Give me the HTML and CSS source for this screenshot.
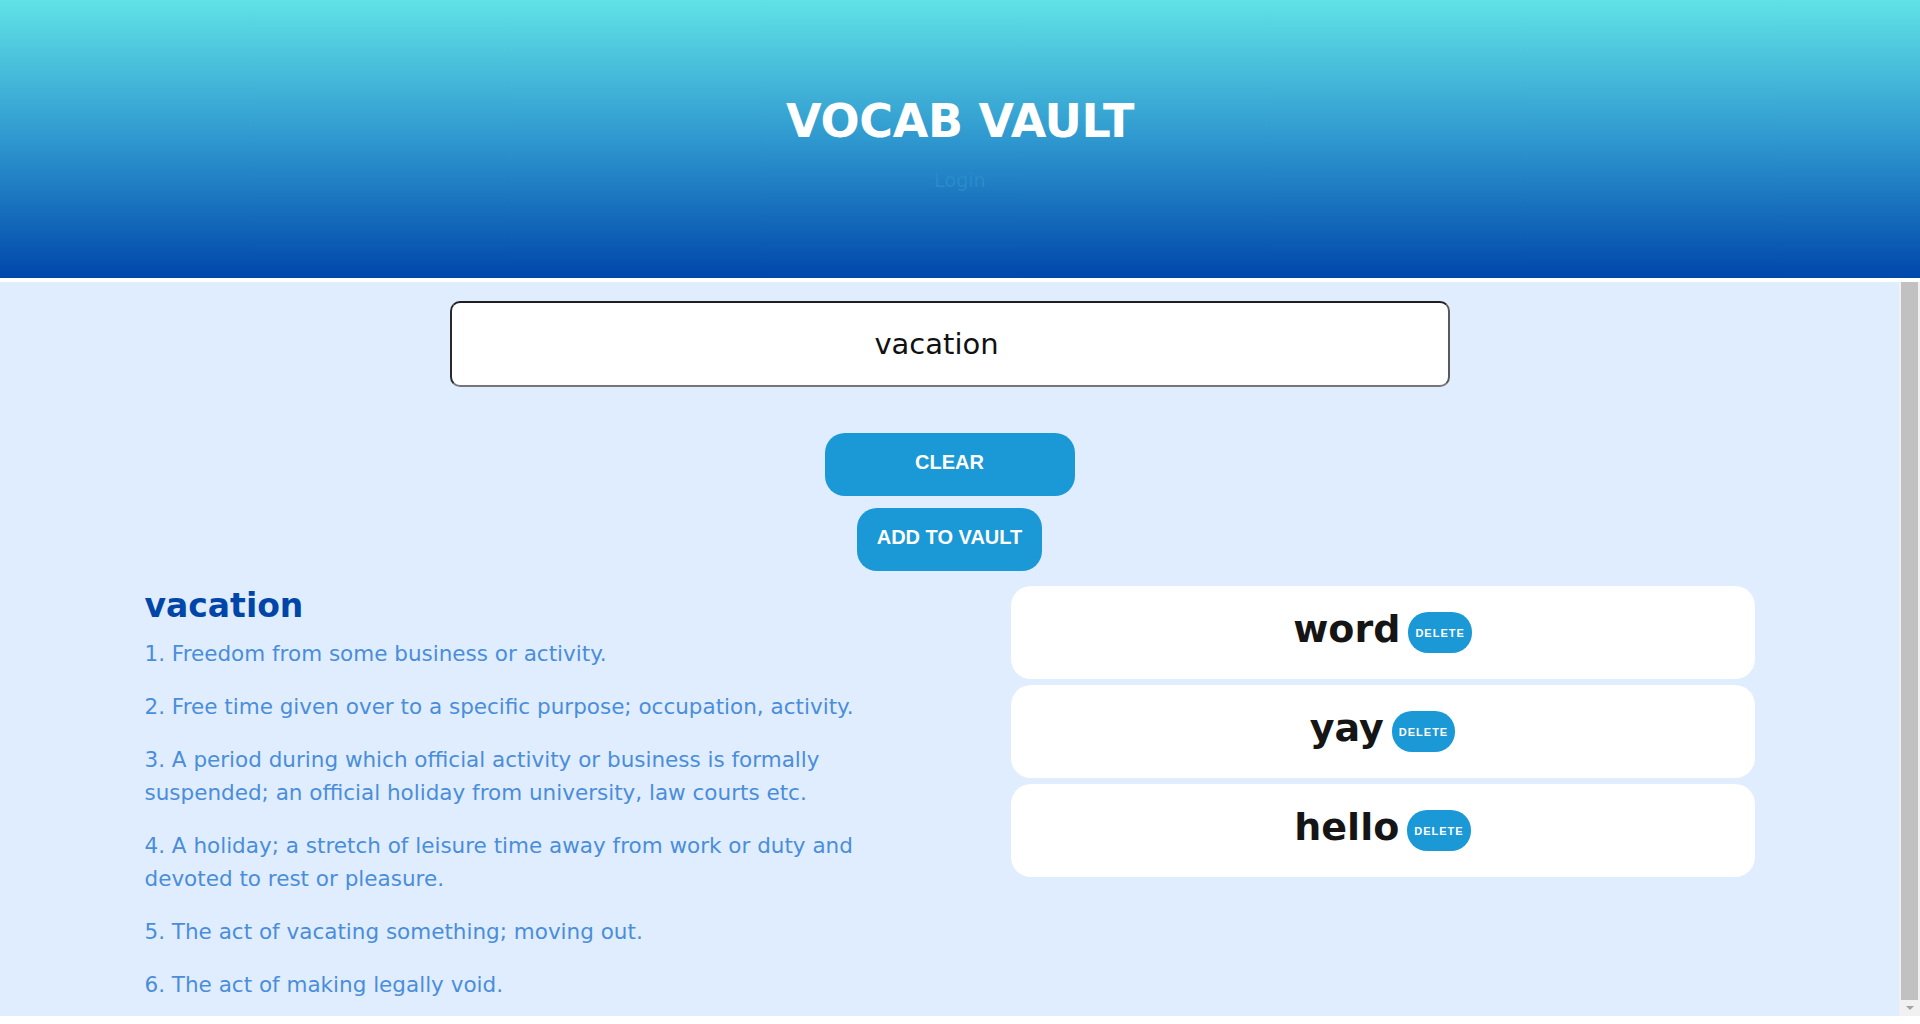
FILE: index.html
```html
<!DOCTYPE html>
<html lang="en">
<head>
<meta charset="utf-8">
<title>Vocab Vault</title>
<link rel="stylesheet" href="styles.css">
</head>
<body>
<header class="hero">
  <h1 class="title">VOCAB VAULT</h1>
  <a class="login">Login</a>
</header>
<main class="main">
  <div class="pane">
    <div class="search">
      <input class="search-input" type="text" value="vacation">
    </div>
    <div class="actions">
      <button class="btn btn-clear">CLEAR</button>
      <button class="btn">ADD TO VAULT</button>
    </div>
    <section class="content">
      <div class="definition">
        <h2 class="def-word">vacation</h2>
        <p class="def">1. Freedom from some business or activity.</p>
        <p class="def">2. Free time given over to a specific purpose; occupation, activity.</p>
        <p class="def">3. A period during which official activity or business is formally suspended; an official holiday from university, law courts etc.</p>
        <p class="def">4. A holiday; a stretch of leisure time away from work or duty and devoted to rest or pleasure.</p>
        <p class="def">5. The act of vacating something; moving out.</p>
        <p class="def">6. The act of making legally void.</p>
      </div>
      <div class="vault">
        <div class="card"><span class="word">word</span><button class="delete">DELETE</button></div>
        <div class="card"><span class="word">yay</span><button class="delete">DELETE</button></div>
        <div class="card"><span class="word">hello</span><button class="delete">DELETE</button></div>
      </div>
    </section>
  </div>
  <div class="scrollbar" aria-hidden="true">
    <div class="scroll-thumb"></div>
    <div class="scroll-arrow"></div>
  </div>
</main>
</body>
</html>
```
FILE: styles.css
```css
html, body {
  margin: 0;
  padding: 0;
  background: #ffffff;
  height: 100%;
  overflow: hidden;
}

body {
  font-family: "DejaVu Sans", sans-serif;
}

.hero {
  box-sizing: border-box;
  height: 278px;
  padding-top: 99px;
  background: linear-gradient(to bottom, #60e2e6 0%, #2f98cf 50%, #0047aa 100%);
  display: flex;
  flex-direction: column;
  align-items: center;
}

.title {
  margin: 0;
  font-family: "DejaVu Sans", sans-serif;
  font-weight: 700;
  font-size: 46px;
  line-height: 45px;
  letter-spacing: -0.3px;
  color: #ffffff;
}

.login {
  margin-top: 25px;
  font-family: "DejaVu Sans", sans-serif;
  font-size: 19px;
  line-height: 23px;
  color: #2a8bca;
}

.main {
  height: 734px;
  margin-top: 4px;
  display: flex;
  background: #e0edfe;
}

.pane {
  flex: 1;
  min-width: 0;
  box-sizing: border-box;
  padding-top: 19px;
  overflow: hidden;
}

.scrollbar {
  width: 21px;
  display: flex;
  flex-direction: column;
  background: #f1f1f1;
}

.scroll-thumb {
  flex: 1;
  margin: 0 2px;
  background: #c1c1c1;
}

.scroll-arrow {
  height: 16px;
  display: flex;
  justify-content: center;
  align-items: center;
}

.scroll-arrow::before {
  content: "";
  width: 0;
  height: 0;
  border-left: 4px solid transparent;
  border-right: 4px solid transparent;
  border-top: 4px solid #a3a3a3;
}

.search {
  display: flex;
  justify-content: center;
}

.search-input {
  box-sizing: border-box;
  width: 1000px;
  height: 86px;
  padding: 0 26px 0 0;
  border: 2px solid;
  border-color: #1f1f1f #5a5a5a #767676 #2a2a2a;
  border-radius: 10px;
  background: #ffffff;
  font-family: "DejaVu Sans", sans-serif;
  font-size: 29px;
  color: #111111;
  text-align: center;
  outline: none;
}

.actions {
  margin-top: 46px;
  display: flex;
  flex-direction: column;
  align-items: center;
  gap: 12px;
}

.btn {
  box-sizing: border-box;
  height: 63px;
  padding: 0 20px 5px;
  border: none;
  border-radius: 20px;
  background: #1b98d6;
  color: #ffffff;
  font-family: "Liberation Sans", Arial, sans-serif;
  font-weight: 700;
  font-size: 20px;
  line-height: 23px;
  cursor: pointer;
}

.btn-clear {
  width: 250px;
}

.content {
  width: 1610px;
  margin: 15px auto 0;
  display: grid;
  grid-template-columns: 744px 744px;
  column-gap: 122px;
  align-items: start;
}

.def-word {
  margin: 0 0 11px;
  font-family: "DejaVu Sans", sans-serif;
  font-weight: 700;
  font-size: 33px;
  line-height: 40px;
  color: #0046a9;
}

.def {
  margin: 0 0 20px;
  font-family: "DejaVu Sans", sans-serif;
  font-size: 21.5px;
  line-height: 33px;
  color: #4a8ddb;
}

.vault {
  display: flex;
  flex-direction: column;
  gap: 6px;
}

.card {
  box-sizing: border-box;
  height: 93px;
  padding: 21px 0;
  background: #ffffff;
  border-radius: 20px;
  display: flex;
  justify-content: center;
  align-items: center;
  gap: 8px;
}

.word {
  margin-bottom: 6px;
  font-family: "DejaVu Sans", sans-serif;
  font-weight: 700;
  font-size: 38px;
  line-height: 45px;
  color: #151515;
}

.delete {
  box-sizing: border-box;
  height: 41px;
  padding: 0 7px;
  border: none;
  border-radius: 20px;
  background: #1b98d6;
  color: #ffffff;
  font-family: "Liberation Sans", Arial, sans-serif;
  font-weight: 700;
  font-size: 11px;
  letter-spacing: 1px;
  cursor: pointer;
}
```
